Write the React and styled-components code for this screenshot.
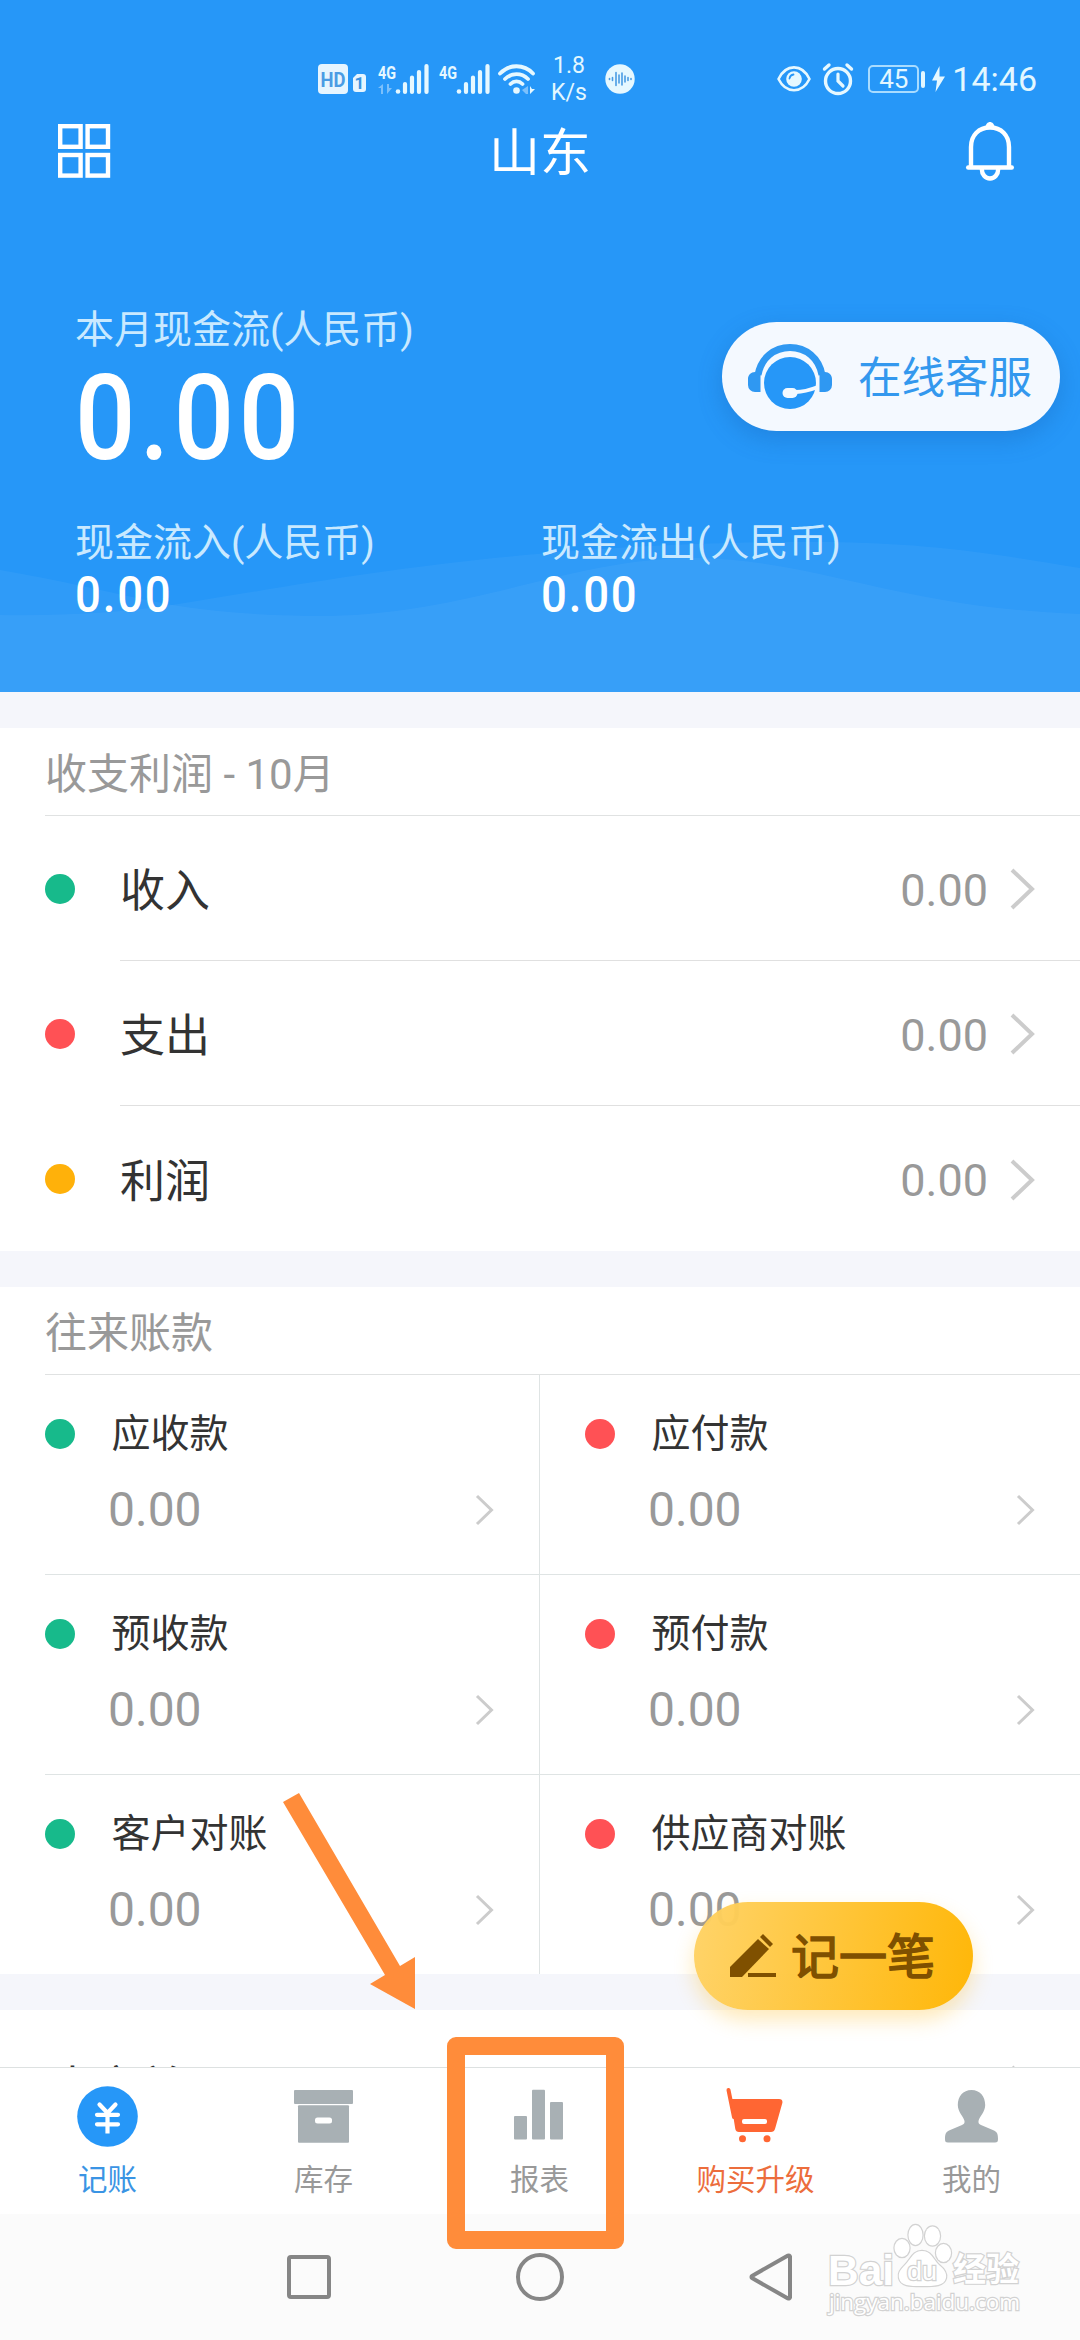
import React from "react";
import styled, { createGlobalStyle } from "styled-components";

const GlobalStyle = createGlobalStyle`
  * {
    box-sizing: border-box;
  }
  body {
    margin: 0;
    font-family: Roboto, "Noto Sans CJK SC", sans-serif;
    color: #333;
    background: #fff;
  }
  svg {
    display: block;
    flex: none;
    overflow: visible;
  }
`;

const Screen = styled.div`
  position: relative;
  display: flex;
  flex-direction: column;
  width: 1080px;
  height: 2340px;
  overflow: hidden;
`;

const Header = styled.header`
  position: relative;
  height: 692px;
  flex: none;
  color: #fff;
  background: #2697f8;
`;

const Waves = styled.svg`
  position: absolute;
  left: 0;
  bottom: 0;
`;

const HeaderBody = styled.div`
  position: relative;
`;

const StatusBar = styled.div`
  display: flex;
  justify-content: space-between;
  height: 108px;
  padding: 50px 43px 0 318px;
  color: #e3f7ff;
`;

const StatusGroup = styled.div`
  display: flex;
  align-items: center;
`;

const Spacer = styled.span`
  flex: none;
  width: ${(props) => props.$w}px;
`;

const NetSpeed = styled.div`
  width: 38px;
  font-size: 23px;
  line-height: 27px;
  text-align: center;
`;

const Battery = styled.div`
  width: 51px;
  height: 28px;
  border: 2px solid #a9dcff;
  border-radius: 5px;
  font-size: 26px;
  line-height: 25px;
  text-align: center;
`;

const BatteryTip = styled.div`
  width: 4px;
  height: 17px;
  margin-left: 2px;
  border-radius: 2px;
  background: #e3f7ff;
`;

const Clock = styled.div`
  font-size: 34px;
  line-height: 40px;
`;

const Toolbar = styled.div`
  display: flex;
  align-items: center;
  justify-content: space-between;
  height: 86px;
  padding: 0 66px 0 58px;
`;

const Title = styled.h1`
  margin: 0;
  padding: 6px 0 0 3px;
  font-size: 51px;
  line-height: 60px;
  font-weight: 400;
`;

const Summary = styled.div`
  padding: 112px 20px 0 75px;
`;

const SummaryTop = styled.div`
  display: flex;
  justify-content: space-between;
  align-items: flex-start;
`;

const CashLabel = styled.div`
  height: 48px;
  font-size: 39px;
  line-height: 49px;
  color: #c9e9ff;
`;

/* narrow figures for the cash numbers */
const BigAmount = styled.div`
  margin-top: 7px;
  height: 112px;
  font-size: 118px;
  line-height: 117px;
  font-weight: 500;
  letter-spacing: 5px;
  transform: scaleX(0.9);
  transform-origin: 0 50%;
`;

const Flows = styled.div`
  display: grid;
  grid-template-columns: 466px 1fr;
  margin-top: 46px;
`;

const FlowAmount = styled.div`
  font-size: 50px;
  line-height: 57px;
  font-weight: 500;
  letter-spacing: 2px;
  transform: scaleX(0.91);
  transform-origin: 0 50%;
`;

const ServiceButton = styled.button`
  display: flex;
  align-items: center;
  width: 338px;
  height: 109px;
  margin-top: 16px;
  padding: 0 0 0 26px;
  border: 0;
  border-radius: 55px;
  font: inherit;
  font-size: 43.5px;
  line-height: 60px;
  color: #3398ee;
  background: #f4f9ff;
  box-shadow: 0 8px 24px rgba(20, 90, 170, 0.3);

  svg {
    margin-right: 26px;
  }

  span {
    padding-top: 4px;
  }
`;

const Content = styled.main`
  flex: 1;
  min-height: 0;
  overflow: hidden;
  background: #f5f6fb;
`;

const Section = styled.section`
  margin-top: 36px;
  background: #fff;
`;

const SectionTitle = styled.h2`
  height: 88px;
  margin: 0 0 0 45px;
  font-size: 42px;
  line-height: 93px;
  font-weight: 400;
  color: #999;
  border-bottom: 1px solid #e0e2e2;
`;

const Dot = styled.span`
  flex: none;
  width: 30px;
  height: 30px;
  border-radius: 50%;
  background: ${(props) => props.$color};
`;

const Row = styled.div`
  display: flex;
  align-items: center;
  height: 145px;
  padding-left: 45px;
`;

const RowBody = styled.div`
  flex: 1;
  display: flex;
  align-items: center;
  height: 145px;
  margin-left: 45px;
  padding: 2px 45px 0 0;
  font-size: 45px;
  line-height: 60px;
  border-bottom: ${(props) => (props.$last ? "0" : "1px solid #e0e0e0")};
`;

const RowLabel = styled.span`
  padding-top: 6px;
`;

const RowValue = styled.span`
  margin-left: auto;
  margin-right: 22px;
  padding-top: 3px;
  color: #999;
`;

const Grid = styled.div`
  display: grid;
  grid-template-columns: 495px 540px;
  margin-left: 45px;
`;

const Cell = styled.div`
  height: ${(props) => (props.$last ? 199 : 200)}px;
  padding: 34px 45px 0 ${(props) => (props.$right ? 45 : 0)}px;
  border-right: ${(props) => (props.$right ? "0" : "1px solid #dfe4e4")};
  border-bottom: ${(props) => (props.$last ? "0" : "1px solid #dfe4e4")};
`;

const CellHead = styled.div`
  display: flex;
  align-items: center;
  gap: 36.5px;
  height: 50px;
  font-size: 39px;
  line-height: 50px;
`;

const CellValue = styled.div`
  display: flex;
  align-items: center;
  justify-content: space-between;
  margin-top: 20px;
  padding-left: 63px;
  font-size: 48px;
  line-height: 61px;
  color: #999;
`;

const PeekRow = styled.div`
  display: flex;
  align-items: center;
  justify-content: space-between;
  height: 150px;
  padding: 1px 45px 0 50px;
  font-size: 45px;
  line-height: 60px;
`;

const TabBar = styled.nav`
  display: grid;
  grid-template-columns: repeat(5, 1fr);
  flex: none;
  height: 147px;
  border-top: 1px solid #dde1e1;
  background: #fff;
`;

const Tab = styled.div`
  display: flex;
  flex-direction: column;
  align-items: center;
  padding: 18px 1px 0 0;
  font-size: 29.5px;
  line-height: 40px;
  color: ${(props) => props.$color || "#999"};

  svg {
    margin-bottom: 13px;
  }
`;

const SystemNav = styled.div`
  display: flex;
  flex: none;
  align-items: center;
  justify-content: center;
  gap: 183px;
  height: 126px;
  background: #fbfbfb;
`;

const RecordButton = styled.button`
  position: absolute;
  left: 694px;
  top: 1902px;
  display: flex;
  align-items: center;
  width: 279px;
  height: 108px;
  padding: 0 0 0 36px;
  border: 0;
  border-radius: 54px;
  font: inherit;
  font-size: 48px;
  line-height: 60px;
  color: #7f5000;
  -webkit-text-stroke: 1.6px #7f5000;
  background: linear-gradient(100deg, rgba(255, 210, 100, 0.96), rgba(255, 182, 5, 0.99));
  box-shadow: 0 10px 20px rgba(255, 190, 40, 0.32);

  svg {
    margin-right: 15px;
  }

  span {
    padding-top: 4px;
  }
`;

const Arrow = styled.svg`
  position: absolute;
  left: 280px;
  top: 1790px;
`;

const Highlight = styled.div`
  position: absolute;
  left: 447px;
  top: 2037px;
  width: 177px;
  height: 212px;
  border: 18px solid #ff8c3a;
  border-radius: 9px;
`;

const Watermark = styled.svg`
  position: absolute;
  left: 820px;
  top: 2220px;
`;

const Chevron = ({ small }) =>
  small ? (
    <svg width="19" height="32" viewBox="0 0 19 32" fill="none" stroke="#ccc" strokeWidth="3">
      <path d="M2 2l14.500 14L2 30" />
    </svg>
  ) : (
    <svg width="25" height="42" viewBox="0 0 25 42" fill="none" stroke="#ccc" strokeWidth="4">
      <path d="M2 2l20 19L2 40" />
    </svg>
  );

const HdIcon = () => (
  <svg width="48" height="30" viewBox="0 0 48 30">
    <rect width="30" height="30" rx="4" fill="#e6f5ff" />
    <text x="15" y="22.500" textAnchor="middle" fontSize="20.500" fontWeight="700" textLength="25" lengthAdjust="spacingAndGlyphs" fill="#4a9ce4">HD</text>
    <path d="M39 10h6a3 3 0 0 1 3 3v12a3 3 0 0 1-3 3h-7a3 3 0 0 1-3-3V14z" fill="#e6f5ff" />
    <text x="41.300" y="25" textAnchor="middle" fontSize="17" fontWeight="700" fill="#3c92e0">1</text>
  </svg>
);

const SignalIcon = ({ arrows }) => (
  <svg width="51" height="32" viewBox="0 0 51 32" fill="#e6f8ff">
    <text x="0" y="16" fontSize="19" fontWeight="700" textLength="18" lengthAdjust="spacingAndGlyphs">4G</text>
    {arrows && (
      <path d="M5 21v10H3v-6H0zM9 21v10l5-6h-3v-4z" fill="#7cc0fb" />
    )}
    <circle cx="20" cy="28.500" r="2.300" />
    <g stroke="#e6f8ff" strokeWidth="4.200" strokeLinecap="round">
      <path d="M27 21v8M34 14.500V29M41 9v20M48.500 3v26" />
    </g>
  </svg>
);

const WifiIcon = () => (
  <svg width="37" height="32" viewBox="0 0 37 32" fill="none" stroke="#e6f8ff" strokeWidth="3.800" strokeLinecap="round">
    <path d="M2 10.500C11 .800 26 .800 35 10.500" />
    <path d="M7 16c6.500-6.500 16.500-6.500 23 0" />
    <path d="M12.500 21c3.500-3.500 8.500-3.500 12 0" />
    <circle cx="18.500" cy="27.500" r="3.300" fill="#e6f8ff" stroke="none" />
    <path d="M30 23v8h-2l-4-4z" fill="#7cc0fb" stroke="none" />
    <path d="M32 23v8l5-5h-3z" fill="#e6f8ff" stroke="none" />
  </svg>
);

const VoiceIcon = () => (
  <svg width="30" height="30" viewBox="0 0 30 30">
    <circle cx="15" cy="15" r="14.700" fill="#e6f8ff" />
    <path d="M4.500 14.500v1M7.500 13.500v3M11 8.500v13M14 11v8M17 9v12M20 12v6M23 13.500v3M26 14.500v1" stroke="#4a9ce4" strokeWidth="1.600" strokeLinecap="round" />
  </svg>
);

const EyeIcon = () => (
  <svg width="34" height="28" viewBox="0 0 34 28" fill="none" stroke="#e6f8ff" strokeWidth="2.600">
    <path d="M1.500 14C9-1.500 25-1.500 32.500 14 25 29 9 29 1.500 14z" strokeLinejoin="round" />
    <circle cx="17" cy="14" r="7.800" fill="#e6f8ff" stroke="none" />
    <path d="M12.500 13.500c.300-2.200 1.700-3.700 4-4" stroke="#2697f8" strokeWidth="1.800" strokeLinecap="round" />
  </svg>
);

const AlarmIcon = () => (
  <svg width="32" height="32" viewBox="0 0 32 32" fill="none" stroke="#e6f8ff" strokeWidth="3.400" strokeLinecap="round">
    <circle cx="16" cy="18" r="12.500" />
    <path d="M2.500 6L7 2M29.500 6L25 2" />
    <path d="M16 11v7l5 5" strokeWidth="3.200" />
  </svg>
);

const BoltIcon = () => (
  <svg width="13" height="26" viewBox="0 0 13 26" fill="#e6f8ff">
    <path d="M7.500 0L0 14.500h5L3.500 26 13 10.500H7.500z" />
  </svg>
);

const MenuIcon = () => (
  <svg width="53" height="54" viewBox="0 0 53 54" fill="none" stroke="#fff" strokeWidth="4.400">
    <rect x="2.200" y="2.200" width="20.400" height="20.600" />
    <rect x="29.600" y="2.200" width="20.400" height="20.600" />
    <rect x="2.200" y="31" width="20.400" height="20.600" />
    <rect x="29.600" y="31" width="20.400" height="20.600" />
  </svg>
);

const BellIcon = () => (
  <svg width="48" height="60" viewBox="0 0 48 60" fill="none" stroke="#fff" strokeWidth="4.400" strokeLinecap="round">
    <path d="M5 45V26C5 14 13 6.500 24 6.500S43 14 43 26v19" />
    <path d="M2.200 46.500h43.600" />
    <path d="M15.800 48c0 5.500 3.500 9.500 8.200 9.500s8.200-4 8.200-9.500" />
    <path d="M19.500 7c0-8 9-8 9 0z" fill="#fff" stroke="none" />
  </svg>
);

const HeadsetIcon = () => (
  <svg width="84" height="66" viewBox="0 0 84 66">
    <circle cx="42" cy="39" r="26" fill="#2697f8" />
    <path d="M10 31C13 14 26 3.500 42 3.500S71 14 74 31" fill="none" stroke="#2f98f2" strokeWidth="7" />
    <path d="M12.500 27v21H7a7 7 0 0 1-7-7v-6c0-4 3-7 7-7zM71.500 27v21H77a7 7 0 0 0 7-7v-6c0-4-3-7-7-7z" fill="#2f98f2" />
    <path d="M48 48c8 0 14-2 22-5" fill="none" stroke="#f4f9ff" strokeWidth="4" />
    <rect x="34.500" y="44" width="15" height="10" rx="5" fill="#f4f9ff" />
  </svg>
);

const PencilIcon = () => (
  <svg width="46" height="44" viewBox="0 0 46 44" fill="#7f5000">
    <path d="M0 33L28 5l11 10-27 28H0z" />
    <path d="M30 3l3-3 10 10-3 3z" />
    <path d="M18 39h28v4H18z" />
  </svg>
);

const YenIcon = () => (
  <svg width="61" height="61" viewBox="0 0 61 61">
    <circle cx="30.500" cy="30.500" r="30.300" fill="#2697f8" />
    <g fill="none" stroke="#fff" strokeWidth="4.200" strokeLinecap="round">
      <path d="M22.500 18.500l8 8.500 8-8.500M20 28.800h21M20 38.300h21" />
      <path d="M30.500 27v20.500" strokeLinecap="butt" />
    </g>
  </svg>
);

const BoxIcon = () => (
  <svg width="61" height="61" viewBox="0 0 61 61" fill="#a8b0b4">
    <rect x="1" y="4" width="59" height="14" rx="1" />
    <rect x="5" y="19.300" width="51" height="37.500" rx="1" />
    <rect x="22" y="31.500" width="17" height="6" rx="2.500" fill="#fff" />
  </svg>
);

const ChartIcon = () => (
  <svg width="61" height="61" viewBox="0 0 61 61" fill="#a8b0b4">
    <rect x="5" y="30" width="13" height="23.500" rx="1" />
    <rect x="23" y="3.800" width="13" height="49.700" rx="1" />
    <rect x="41" y="16" width="13" height="37.500" rx="1" />
  </svg>
);

const CartIcon = () => (
  <svg width="61" height="61" viewBox="0 0 61 61" fill="#ff6633">
    <path d="M3.500 4l5.500 27" fill="none" stroke="#ff6633" strokeWidth="4" strokeLinecap="round" />
    <path d="M5.500 13H54c3 0 4 2 3.200 4.500L50 43c-.600 2-2 3-4 3H14c-2 0-3.300-1-3.700-3z" />
    <rect x="17" y="33" width="25" height="5" rx="2" fill="#fff" />
    <circle cx="17.500" cy="52.800" r="3.500" />
    <circle cx="42" cy="52.800" r="3.500" />
  </svg>
);

const UserIcon = () => (
  <svg width="61" height="61" viewBox="0 0 61 61" fill="#a8b0b4">
    <path d="M30.500 4C22 4 16.800 10.500 16.800 19c0 7 5.700 11.500 6.700 16 .300 2-.500 3-2.500 4L8 44.500c-3.500 1.500-4 4.500-4 8.500 0 2.500.500 3.500 3 3.500h47c2.500 0 3-1 3-3.500 0-4-.500-7-4-8.500L40 39c-2-1-2.800-2-2.500-4 1-4.500 6.700-9 6.700-16C44.200 10.500 39 4 30.500 4z" />
  </svg>
);

const profitRows = [
  { label: "收入", color: "#17ba8b" },
  { label: "支出", color: "#ff5155" },
  { label: "利润", color: "#ffb10a" },
];

const accounts = ["应收款", "应付款", "预收款", "预付款", "客户对账", "供应商对账"];

const tabs = [
  { label: "记账", color: "#3a94e4", icon: <YenIcon /> },
  { label: "库存", icon: <BoxIcon /> },
  { label: "报表", icon: <ChartIcon /> },
  { label: "购买升级", color: "#ec6d3c", icon: <CartIcon /> },
  { label: "我的", icon: <UserIcon /> },
];

export default function App() {
  return (
    <Screen>
      <GlobalStyle />

      <Header>
        <Waves width="1080" height="152" viewBox="0 540 1080 152" fill="#fff" fillOpacity="0.045">
          <path d="M0 570C60 580 110 593 172 605C220 613 270 616 330 616C480 612 570 558 696 558C820 560 900 608 1080 614V692H0z" />
          <path d="M0 615C60 616 120 613 172 605C330 580 520 542 813 542C930 542 1000 555 1080 568V692H0z" />
        </Waves>
        <HeaderBody>
          <StatusBar>
            <StatusGroup>
              <HdIcon />
              <Spacer $w={12} />
              <SignalIcon arrows />
              <Spacer $w={10} />
              <SignalIcon />
              <Spacer $w={8} />
              <WifiIcon />
              <Spacer $w={15} />
              <NetSpeed>
                1.8
                <br />
                K/s
              </NetSpeed>
              <Spacer $w={17} />
              <VoiceIcon />
            </StatusGroup>
            <StatusGroup>
              <EyeIcon />
              <Spacer $w={11} />
              <AlarmIcon />
              <Spacer $w={14} />
              <Battery>45</Battery>
              <BatteryTip />
              <Spacer $w={7} />
              <BoltIcon />
              <Spacer $w={7} />
              <Clock>14:46</Clock>
            </StatusGroup>
          </StatusBar>

          <Toolbar>
            <MenuIcon />
            <Title>山东</Title>
            <BellIcon />
          </Toolbar>

          <Summary>
            <SummaryTop>
              <div>
                <CashLabel>本月现金流(人民币)</CashLabel>
                <BigAmount>0.00</BigAmount>
              </div>
              <ServiceButton>
                <HeadsetIcon />
                <span>在线客服</span>
              </ServiceButton>
            </SummaryTop>
            <Flows>
              <div>
                <CashLabel>现金流入(人民币)</CashLabel>
                <FlowAmount>0.00</FlowAmount>
              </div>
              <div>
                <CashLabel>现金流出(人民币)</CashLabel>
                <FlowAmount>0.00</FlowAmount>
              </div>
            </Flows>
          </Summary>
        </HeaderBody>
      </Header>

      <Content>
        <Section>
          <SectionTitle>收支利润 - 10月</SectionTitle>
          {profitRows.map((row, i) => (
            <Row key={row.label}>
              <Dot $color={row.color} />
              <RowBody $last={i === profitRows.length - 1}>
                <RowLabel>{row.label}</RowLabel>
                <RowValue>0.00</RowValue>
                <Chevron />
              </RowBody>
            </Row>
          ))}
        </Section>

        <Section>
          <SectionTitle>往来账款</SectionTitle>
          <Grid>
            {accounts.map((label, i) => (
              <Cell key={label} $right={i % 2 === 1} $last={i > 3}>
                <CellHead>
                  <Dot $color={i % 2 ? "#ff5155" : "#17ba8b"} />
                  {label}
                </CellHead>
                <CellValue>
                  0.00
                  <Chevron small />
                </CellValue>
              </Cell>
            ))}
          </Grid>
        </Section>

        <Section>
          <PeekRow>
            <RowLabel>未交单</RowLabel>
            <Chevron />
          </PeekRow>
        </Section>
      </Content>

      <TabBar>
        {tabs.map((tab) => (
          <Tab key={tab.label} $color={tab.color}>
            {tab.icon}
            {tab.label}
          </Tab>
        ))}
      </TabBar>

      <SystemNav>
        <svg width="48" height="48" viewBox="0 0 48 48" fill="none" stroke="#868686" strokeWidth="4">
          <rect x="4" y="4" width="40" height="40" rx="2" />
        </svg>
        <svg width="48" height="48" viewBox="0 0 48 48" fill="none" stroke="#868686" strokeWidth="4">
          <circle cx="24" cy="24" r="22" />
        </svg>
        <svg width="48" height="48" viewBox="0 0 48 48" fill="none" stroke="#868686" strokeWidth="4" strokeLinejoin="round">
          <path d="M43 3.500v41a1.500 1.500 0 0 1-2 1L5 25a1.200 1.200 0 0 1 0-2L41 2.500a1.500 1.500 0 0 1 2 1z" />
        </svg>
      </SystemNav>

      <RecordButton>
        <PencilIcon />
        <span>记一笔</span>
      </RecordButton>

      <Arrow width="140" height="224" viewBox="280 1790 140 224" fill="#ff8c3a">
        <path d="M283 1802l16-9 101 173 15-9v52l-45-25 15-9z" />
      </Arrow>
      <Highlight />

      <Watermark width="210" height="106" viewBox="0 0 210 106" fill="#fff" stroke="#d2d2d2" strokeWidth="2.400" paintOrder="stroke">
        <text x="8" y="65" fontSize="43" fontWeight="700" fontFamily="Liberation Sans" textLength="66" lengthAdjust="spacingAndGlyphs">Bai</text>
        <path d="M102 31c-9 0-11 8-17 14-5 5-7 8-6 13 2 8 10 8 23 8s22 0 24-8c1-5-2-9-7-13-6-6-8-14-17-14z" />
        <ellipse cx="82" cy="28" rx="7.500" ry="9" />
        <ellipse cx="95.500" cy="15" rx="7" ry="10" />
        <ellipse cx="112.500" cy="16" rx="7.500" ry="9.500" />
        <ellipse cx="123.500" cy="33" rx="7.500" ry="9" />
        <text x="87" y="60" fontSize="26" fontWeight="400" fontFamily="Liberation Sans" textLength="30" lengthAdjust="spacingAndGlyphs">du</text>
        <text x="133" y="61" fontSize="33" fontWeight="700" fontFamily="Noto Sans CJK SC" textLength="66" lengthAdjust="spacingAndGlyphs">经验</text>
        <text x="9" y="90" fontSize="22" fontWeight="400" fontFamily="Open Sans" textLength="191" lengthAdjust="spacingAndGlyphs">jingyan.baidu.com</text>
      </Watermark>
    </Screen>
  );
}
